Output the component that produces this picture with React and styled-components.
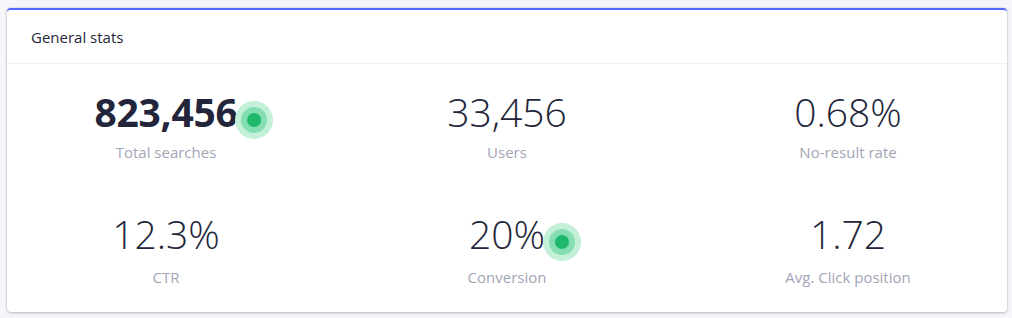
import React from "react";
import styled, { createGlobalStyle } from "styled-components";

const Global = createGlobalStyle`
  html, body { margin: 0; padding: 0; background: #f5f5fa; }
  body { font-family: "Open Sans", "Liberation Sans", sans-serif; }
`;

const Page = styled.div`
  padding: 8px 5px 7px 7px;
`;

const Card = styled.section`
  background: #fff;
  border-top: 2px solid #5468ff;
  border-radius: 4px;
  box-shadow: 0 0 0 1px rgba(35, 38, 59, 0.05), 0 1px 3px 0 rgba(35, 38, 59, 0.25);
  overflow: hidden;
`;

const Header = styled.header`
  height: 53px;
  display: flex;
  align-items: center;
  padding: 0 24px;
  border-bottom: 1px solid #f0f0f4;
  font-size: 15px;
  color: #23263b;
`;

const Grid = styled.div`
  display: grid;
  grid-template-columns: repeat(3, 341px);
  justify-content: center;
  padding: 20px 0 25px;
  row-gap: 44px;
`;

const Stat = styled.div`
  display: flex;
  flex-direction: column;
  align-items: center;
`;

const Value = styled.div`
  position: relative;
  font-size: 39px;
  line-height: 56px;
  font-weight: ${(p) => (p.$bold ? 700 : 300)};
  color: #23263b;
  letter-spacing: ${(p) => (p.$bold ? "-0.3px" : "0")};
`;

const Pulse = styled.span`
  position: absolute;
  left: 100%;
  top: 50%;
  width: 38px;
  height: 38px;
  margin-left: -20px;
  margin-top: -11px;
  border-radius: 50%;
  background: #c4efd9;
  display: flex;
  align-items: center;
  justify-content: center;
  transform: translateX(18px);
  &::before {
    content: "";
    width: 26px;
    height: 26px;
    border-radius: 50%;
    background: #84deb2;
    display: flex;
  }
  &::after {
    content: "";
    position: absolute;
    width: 14px;
    height: 14px;
    border-radius: 50%;
    background: #1eb86c;
  }
`;

const Label = styled.div`
  margin-top: ${(p) => (p.$row2 ? 5 : 2)}px;
  font-size: 15px;
  line-height: 20px;
  color: #a2a5b6;
`;

const stats = [
  { value: "823,456", label: "Total searches", bold: true, pulse: true },
  { value: "33,456", label: "Users" },
  { value: "0.68%", label: "No-result rate" },
  { value: "12.3%", label: "CTR" },
  { value: "20%", label: "Conversion", pulse: true },
  { value: "1.72", label: "Avg. Click position" },
];

export default function App() {
  return (
    <>
      <Global />
      <Page>
        <Card>
          <Header>General stats</Header>
          <Grid>
            {stats.map((s, i) => (
              <Stat key={s.label}>
                <Value $bold={s.bold}>
                  {s.value}
                  {s.pulse && <Pulse />}
                </Value>
                <Label $row2={i >= 3}>{s.label}</Label>
              </Stat>
            ))}
          </Grid>
        </Card>
      </Page>
    </>
  );
}
